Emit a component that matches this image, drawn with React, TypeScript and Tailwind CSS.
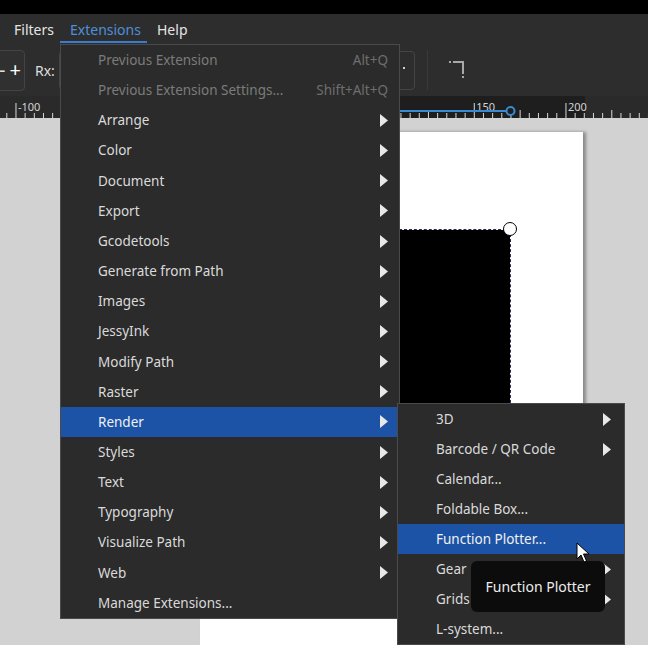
import type { FC } from "react";

type MenuItem = {
  label: string;
  shortcut?: string;
  disabled?: boolean;
  sub?: boolean;
  active?: boolean;
};

const mainItems: MenuItem[] = [
  { label: "Previous Extension", shortcut: "Alt+Q", disabled: true },
  { label: "Previous Extension Settings...", shortcut: "Shift+Alt+Q", disabled: true },
  { label: "Arrange", sub: true },
  { label: "Color", sub: true },
  { label: "Document", sub: true },
  { label: "Export", sub: true },
  { label: "Gcodetools", sub: true },
  { label: "Generate from Path", sub: true },
  { label: "Images", sub: true },
  { label: "JessyInk", sub: true },
  { label: "Modify Path", sub: true },
  { label: "Raster", sub: true },
  { label: "Render", sub: true, active: true },
  { label: "Styles", sub: true },
  { label: "Text", sub: true },
  { label: "Typography", sub: true },
  { label: "Visualize Path", sub: true },
  { label: "Web", sub: true },
  { label: "Manage Extensions..." },
];

const renderItems: MenuItem[] = [
  { label: "3D", sub: true },
  { label: "Barcode / QR Code", sub: true },
  { label: "Calendar..." },
  { label: "Foldable Box..." },
  { label: "Function Plotter...", active: true },
  { label: "Gear", sub: true },
  { label: "Grids", sub: true },
  { label: "L-system..." },
];

const Arrow: FC = () => (
  <svg width="8" height="13" viewBox="0 0 8 13" className="shrink-0">
    <polygon points="0,0 8,6.5 0,13" fill="#e8e8e8" />
  </svg>
);

const MenuRow: FC<{ item: MenuItem; h: string; pl: string; pr: string }> = ({ item, h, pl, pr }) => (
  <div
    className={`flex items-center ${h} ${pl} ${pr} ${item.active ? "bg-[#1c53a6] text-[#f0f0f0]" : ""} ${
      item.disabled ? "text-[#7b7b7b]" : "text-[#dadada]"
    }`}
  >
    <span className="flex-1 whitespace-nowrap">{item.label}</span>
    {item.shortcut && <span className="text-[#6e6e6e] whitespace-nowrap">{item.shortcut}</span>}
    {item.sub && <Arrow />}
  </div>
);

// ruler: 0 sits at x=199.3, 1 unit = 1.8333px
const Ruler: FC = () => {
  const ticks = [];
  for (let u = -110; u <= 250; u += 5) {
    const x = 199.3 + u * 1.8333;
    const len = u % 50 === 0 ? 15 : u % 25 === 0 ? 8 : 5;
    ticks.push(<line key={u} x1={x} x2={x} y1={22 - len} y2={22} stroke="#d8d8d8" strokeWidth="1" />);
  }
  // the labels between -100 and 150 sit under the open menu
  const labels = [-100, 150, 200];
  return (
    <div className="relative h-[22px] bg-[#2a2a2a]">
      <div className="absolute left-[200px] top-0 h-full w-[385px] bg-[#1e1e1e]" />
      <svg width="648" height="22" className="absolute left-0 top-0">
        {ticks}
        {labels.map((u) => (
          <text
            key={u}
            x={199.3 + u * 1.8333 + 2}
            y={15}
            fontSize="11"
            fill="#d4d4d4"
            fontFamily="'Noto Sans', sans-serif"
          >
            {u}
          </text>
        ))}
        <line x1="380" x2="506" y1="15" y2="15" stroke="#3a8ad3" strokeWidth="2" />
        <circle cx="510.5" cy="15" r="4" fill="#1e1e1e" stroke="#3a8ad3" strokeWidth="2" />
      </svg>
    </div>
  );
};

export default function App() {
  return (
    <div className="relative flex h-[645px] w-[648px] flex-col overflow-hidden bg-[#d3d2d2] font-['Noto_Sans',sans-serif] text-[13.5px]">
      <div className="h-[14px] shrink-0 bg-black" />

      {/* menubar */}
      <div className="flex h-[30px] shrink-0 items-center bg-[#2d2d2d] text-[14px] text-[#e4e4e4]">
        <span className="w-[60px] pl-[14px]">Filters</span>
        <span className="relative flex h-full w-[87px] items-center pl-[10px] text-[#4d8fdb]">
          Extensions
          <span className="absolute bottom-[1px] left-0 right-0 h-[2px] bg-[#3a7cd0]" />
        </span>
        <span className="pl-[10px]">Help</span>
      </div>

      {/* tool controls */}
      <div className="relative flex h-[52px] shrink-0 items-center bg-[#2d2d2d]">
        <div className="ml-[-6px] flex h-[41px] w-[31px] items-center justify-end rounded-[4px] border border-[#444] bg-[#303030] pr-[3px] text-[20px] leading-none text-white">
          <span className="mr-[4px] text-[#ddd]">-</span>+
        </div>
        <span className="ml-[10px] text-[14px] text-[#dedede]">Rx:</span>
        <div className="ml-[4px] h-[39px] w-[356px] rounded-[4px] border border-[#454545]">
          <div className="ml-[343px] mt-[15px] h-[2px] w-[2px] bg-[#cfcfcf]" />
        </div>
        <div className="ml-[12px] h-[40px] w-px bg-[#3a3a3a]" />
        <svg width="18" height="20" viewBox="0 0 18 20" className="ml-[20px]">
          <rect x="1" y="1" width="2" height="2" fill="#a8a8a8" />
          <path d="M5 2 H15 V14" fill="none" stroke="#a8a8a8" strokeWidth="2" />
          <rect x="14" y="16" width="2" height="2" fill="#a8a8a8" />
        </svg>
      </div>

      <Ruler />

      {/* canvas */}
      <div className="relative flex-1">
        <div className="absolute left-[200px] top-[14px] h-[600px] w-[383px] bg-white shadow-[3px_0_3px_rgba(0,0,0,0.35)]" />
        <div className="absolute left-[300px] top-[111px] h-[370px] w-[211px] border border-dashed border-[#2c2450] bg-black bg-clip-padding" />
        <div className="absolute left-[503px] top-[104px] h-[14px] w-[14px] rounded-full border-[1.5px] border-black bg-white" />
      </div>

      {/* Extensions menu */}
      <div className="absolute left-[60px] top-[44px] w-[340px] border border-[#4a4a4a] bg-[#2b2b2b]">
        {mainItems.map((it) => (
          <MenuRow key={it.label} item={it} h="h-[30.17px]" pl="pl-[37px]" pr="pr-[11px]" />
        ))}
      </div>

      {/* Render submenu */}
      <div className="absolute left-[397px] top-[403px] w-[228px] border border-[#4a4a4a] bg-[#2b2b2b]">
        {renderItems.map((it) => (
          <MenuRow key={it.label} item={it} h="h-[30px]" pl="pl-[38px]" pr="pr-[13px]" />
        ))}
      </div>

      {/* tooltip */}
      <div className="absolute left-[471px] top-[561px] flex h-[51px] w-[134px] items-center justify-center rounded-[6px] bg-[#0c0c0c] text-[14px] text-[#ececec]">
        Function Plotter
      </div>

      {/* pointer */}
      <svg width="14" height="22" viewBox="0 0 14 22" className="absolute left-[576px] top-[542px]">
        <path d="M1 1 V17 L5 13 L8 20 L10.5 19 L7.5 12 H13 Z" fill="white" stroke="black" strokeWidth="1" strokeLinejoin="round" />
      </svg>
    </div>
  );
}
